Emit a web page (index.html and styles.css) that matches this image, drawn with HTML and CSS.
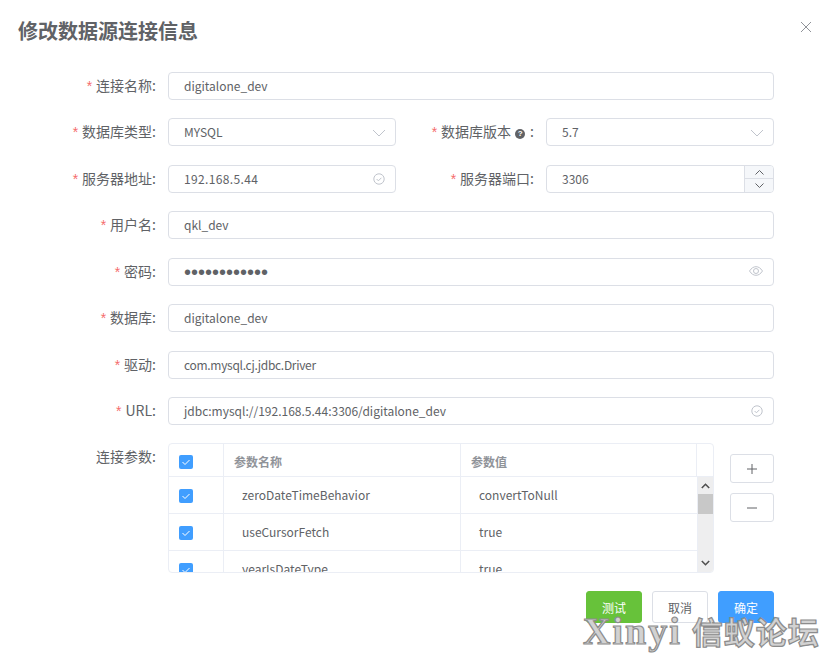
FILE: index.html
```html
<!DOCTYPE html>
<html lang="zh-CN">
<head>
<meta charset="utf-8">
<title>修改数据源连接信息</title>
<link rel="stylesheet" href="styles.css">
</head>
<body>
<div class="dialog">
  <header class="head">
    <h1 class="title">修改数据源连接信息</h1>
    <svg class="close" width="12" height="12" viewBox="0 0 12 12"><path d="M1 1l10 10M11 1L1 11" stroke="#909399" fill="none"/></svg>
  </header>
  <form class="form">
    <div class="row">
      <label class="label"><i>*</i>连接名称:</label>
      <div class="input">digitalone_dev</div>
    </div>
    <div class="row">
      <label class="label"><i>*</i>数据库类型:</label>
      <div class="input half">MYSQL
        <svg class="suffix chev" width="14" height="8" viewBox="0 0 14 8"><path d="M1 1l6 6 6-6" stroke="#c0c4cc" fill="none"/></svg>
      </div>
      <label class="label second"><i>*</i>数据库版本<b class="help">?</b>:</label>
      <div class="input half">5.7
        <svg class="suffix chev" width="14" height="8" viewBox="0 0 14 8"><path d="M1 1l6 6 6-6" stroke="#c0c4cc" fill="none"/></svg>
      </div>
    </div>
    <div class="row">
      <label class="label"><i>*</i>服务器地址:</label>
      <div class="input half"><span class="wide">192.168.5.44</span>
        <svg class="suffix" width="12" height="12" viewBox="0 0 12 12"><circle cx="6" cy="6" r="5.2" stroke="#c0c4cc" fill="none"/><path d="M3.6 6l1.8 1.8 3-3" stroke="#c0c4cc" fill="none"/></svg>
      </div>
      <label class="label second"><i>*</i>服务器端口:</label>
      <div class="input half number">3306
        <div class="spin">
          <span><svg width="9" height="5" viewBox="0 0 9 5"><path d="M.5 4.500l4-4 4 4" stroke="#606266" fill="none"/></svg></span>
          <span><svg width="9" height="5" viewBox="0 0 9 5"><path d="M.5.5l4 4 4-4" stroke="#606266" fill="none"/></svg></span>
        </div>
      </div>
    </div>
    <div class="row">
      <label class="label"><i>*</i>用户名:</label>
      <div class="input">qkl_dev</div>
    </div>
    <div class="row">
      <label class="label"><i>*</i>密码:</label>
      <div class="input"><span class="dots">••••••••••••</span>
        <svg class="suffix" width="14" height="10" viewBox="0 0 14 10"><path d="M.5 5C2.500 2 4.500.7 7 .7S11.500 2 13.500 5C11.500 8 9.500 9.300 7 9.300S2.500 8 .5 5z" stroke="#c0c4cc" fill="none"/><circle cx="7" cy="5" r="2.500" stroke="#c0c4cc" fill="none"/></svg>
      </div>
    </div>
    <div class="row">
      <label class="label"><i>*</i>数据库:</label>
      <div class="input">digitalone_dev</div>
    </div>
    <div class="row">
      <label class="label"><i>*</i>驱动:</label>
      <div class="input"><span class="tight">com.mysql.cj.jdbc.Driver</span></div>
    </div>
    <div class="row">
      <label class="label"><i>*</i>URL:</label>
      <div class="input">jdbc:mysql://192.168.5.44:3306/digitalone_dev
        <svg class="suffix" width="12" height="12" viewBox="0 0 12 12"><circle cx="6" cy="6" r="5.2" stroke="#c0c4cc" fill="none"/><path d="M3.600 6l1.800 1.800 3-3" stroke="#c0c4cc" fill="none"/></svg>
      </div>
    </div>
    <div class="row params">
      <label class="label">连接参数:</label>
      <div class="table">
        <div class="thead">
          <div class="cell check"><span class="box"><svg width="10" height="8" viewBox="0 0 10 8"><path d="M1.500 4l2.500 2.500 4.500-4.500" stroke="#fff" fill="none"/></svg></span></div>
          <div class="cell name">参数名称</div>
          <div class="cell value">参数值</div>
          <div class="cell gutter"></div>
        </div>
        <div class="tbody">
          <div class="rows">
            <div class="tr">
              <div class="cell check"><span class="box"><svg width="10" height="8" viewBox="0 0 10 8"><path d="M1.500 4l2.500 2.500 4.500-4.500" stroke="#fff" fill="none"/></svg></span></div>
              <div class="cell name">zeroDateTimeBehavior</div>
              <div class="cell value">convertToNull</div>
            </div>
            <div class="tr">
              <div class="cell check"><span class="box"><svg width="10" height="8" viewBox="0 0 10 8"><path d="M1.500 4l2.500 2.500 4.500-4.500" stroke="#fff" fill="none"/></svg></span></div>
              <div class="cell name">useCursorFetch</div>
              <div class="cell value">true</div>
            </div>
            <div class="tr">
              <div class="cell check"><span class="box"><svg width="10" height="8" viewBox="0 0 10 8"><path d="M1.500 4l2.500 2.500 4.500-4.500" stroke="#fff" fill="none"/></svg></span></div>
              <div class="cell name">yearIsDateType</div>
              <div class="cell value">true</div>
            </div>
          </div>
          <div class="scrollbar">
            <svg class="arrow" width="9" height="6" viewBox="0 0 9 6"><path d="M.8 5L4.500 1.300 8.200 5" stroke="#505050" stroke-width="1.600" fill="none"/></svg>
            <div class="thumb"></div>
            <svg class="arrow down" width="9" height="6" viewBox="0 0 9 6"><path d="M.8 1L4.500 4.700 8.200 1" stroke="#505050" stroke-width="1.600" fill="none"/></svg>
          </div>
        </div>
      </div>
      <div class="side">
        <button type="button" class="btn icon"><svg width="12" height="12" viewBox="0 0 12 12"><path d="M6 1v10M1 6h10" stroke="#606266" fill="none"/></svg></button>
        <button type="button" class="btn icon"><svg width="12" height="12" viewBox="0 0 12 12"><path d="M1 6h10" stroke="#606266" fill="none"/></svg></button>
      </div>
    </div>
  </form>
  <footer class="foot">
    <button type="button" class="btn action success">测试</button>
    <button type="button" class="btn action">取消</button>
    <button type="button" class="btn action primary">确定</button>
  </footer>
</div>
<div class="watermark">Xinyi<span class="wm-cjk">信蚁论坛</span></div>
</body>
</html>
```

FILE: styles.css
```css
* { box-sizing: border-box; }
html, body { margin: 0; padding: 0; background: #fff; }
body {
  width: 832px;
  height: 657px;
  overflow: hidden;
  position: relative;
  font-family: "Noto Sans CJK SC", "Noto Sans", sans-serif;
  color: #606266;
  font-size: 12px;
}
.dialog { padding: 18px 58px 0 18px; }
.head { display: flex; justify-content: space-between; align-items: flex-start; height: 54px; margin-right: -38px; }
.title { margin: 0; font-size: 20px; line-height: 26px; font-weight: 700; color: #606266; }
.close { margin: 3px 0 0 0; }
.form { display: flex; flex-direction: column; }
.row { display: flex; align-items: center; height: 28px; margin-bottom: 18.43px; }
.label { width: 150px; height: 28px; padding-right: 12px; flex: none; text-align: right; font-size: 14px; color: #606266; white-space: nowrap; line-height: 27px; }
.label i { color: #f56c6c; font-style: normal; margin-right: 4px; font-family: "Liberation Sans", sans-serif; }
.input { flex: 1; position: relative; height: 28px; border: 1px solid #dcdfe6; border-radius: 4px; padding-left: 15px; line-height: 26px; font-size: 12px; background: #fff; }
.input.half { flex: none; width: 228px; }
.wide { letter-spacing: 0.35px; }
.tight { letter-spacing: -0.3px; }
.suffix { position: absolute; right: 10px; top: 7px; }
.suffix.chev { top: 10px; right: 9px; }
.dots { font-family: "Liberation Sans", sans-serif; font-size: 20px; letter-spacing: 0; color: #606266; vertical-align: -2px; line-height: 20px; }
.help { display: inline-block; width: 10px; height: 10px; margin: 0 5px 0 4px; border-radius: 50%; background: #606266; color: #fff; font-size: 8px; line-height: 10px; text-align: center; vertical-align: 1px; font-family: "Liberation Sans", sans-serif; }
.number { overflow: hidden; }
.spin { position: absolute; right: 0; top: 0; bottom: 0; width: 29px; border-left: 1px solid #dcdfe6; background: #f5f7fa; display: flex; flex-direction: column; }
.spin span { flex: 1; display: flex; align-items: center; justify-content: center; }
.spin span + span { border-top: 1px solid #dcdfe6; }
.params { height: 130px; align-items: flex-start; margin: 0; }
.table { width: 546px; height: 130px; border: 1px solid #ebeef5; border-radius: 4px; overflow: hidden; flex: none; }
.thead { display: flex; height: 33px; border-bottom: 1px solid #ebeef5; color: #909399; font-weight: 700; }
.thead .cell { padding-top: 3px; }
.tbody { display: flex; height: 95px; overflow: hidden; }
.rows { flex: 1; }
.tr { display: flex; height: 37px; border-bottom: 1px solid #ebeef5; }
.cell { display: flex; align-items: center; padding-left: 10px; border-right: 1px solid #ebeef5; }
.cell.check { width: 55px; flex: none; padding-left: 10px; }
.cell.name { width: 237px; flex: none; }
.cell.value { width: 236px; flex: none; }
.tr .cell.name { padding-left: 18px; padding-bottom: 1px; }
.tr .cell.value { padding-left: 18px; border-right: 0; padding-bottom: 1px; }
.tr .cell.check { padding-top: 1px; }
.cell.gutter { flex: 1; border-right: 0; padding: 0; }
.box { width: 14px; height: 14px; border-radius: 2px; background: #409eff; display: flex; align-items: center; justify-content: center; }
.scrollbar { width: 16px; flex: none; background: #eeeeef; border-left: 1px solid #ebeef5; display: flex; flex-direction: column; align-items: center; position: relative; }
.arrow { margin-top: 6px; flex: none; }
.arrow.down { margin-top: auto; margin-bottom: 6px; }
.thumb { width: 16px; height: 20px; background: #c8c8c8; margin-top: 5px; }
.side { display: flex; flex-direction: column; gap: 10px; margin: 11px 0 0 16px; }
.btn { font-family: inherit; border: 1px solid #dcdfe6; background: #fff; border-radius: 3px; color: #606266; font-size: 12px; padding: 0; }
.btn.icon { width: 44px; height: 29px; display: flex; align-items: center; justify-content: center; }
.foot { display: flex; justify-content: flex-end; gap: 10px; margin-top: 18px; }
.btn.action { width: 56px; height: 32px; }
.btn.success { background: #67c23a; border-color: #67c23a; color: #fff; }
.btn.primary { background: #409eff; border-color: #409eff; color: #fff; }
.watermark { position: absolute; left: 583px; top: 608px; font-family: "Liberation Serif", "Noto Sans CJK SC", serif; font-weight: 700; font-size: 38px; line-height: 46px; color: #d2d2d2; -webkit-text-stroke: 1.2px #8c8c8c; white-space: nowrap; letter-spacing: 2px; }
.wm-cjk { font-family: "Noto Sans CJK SC", sans-serif; font-size: 31px; letter-spacing: 1px; margin-left: 10px; }
```
